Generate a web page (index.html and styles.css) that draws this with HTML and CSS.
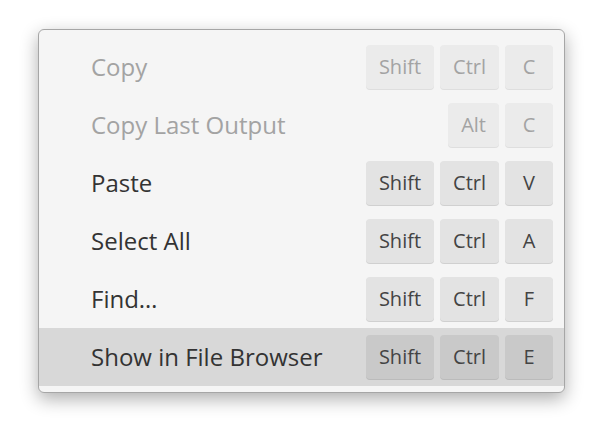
FILE: index.html
```html
<!DOCTYPE html>
<html>
<head>
<meta charset="utf-8">
<link rel="stylesheet" href="styles.css">
</head>
<body>
<div class="menu">
  <div class="item disabled"><span class="label">Copy</span><span class="keys"><span class="key">Shift</span><span class="key">Ctrl</span><span class="key">C</span></span></div>
  <div class="item disabled"><span class="label">Copy Last Output</span><span class="keys"><span class="key">Alt</span><span class="key">C</span></span></div>
  <div class="item"><span class="label">Paste</span><span class="keys"><span class="key">Shift</span><span class="key">Ctrl</span><span class="key">V</span></span></div>
  <div class="item"><span class="label">Select All</span><span class="keys"><span class="key">Shift</span><span class="key">Ctrl</span><span class="key">A</span></span></div>
  <div class="item"><span class="label">Find…</span><span class="keys"><span class="key">Shift</span><span class="key">Ctrl</span><span class="key">F</span></span></div>
  <div class="item hover"><span class="label">Show in File Browser</span><span class="keys"><span class="key">Shift</span><span class="key">Ctrl</span><span class="key">E</span></span></div>
</div>
</body>
</html>
```
FILE: styles.css
```css
html, body {
  margin: 0;
  padding: 0;
  background: #ffffff;
  font-family: "Open Sans", "Noto Sans", sans-serif;
}
body {
  padding: 29px 0 40px 38px;
}
.menu {
  width: 525px;
  background: #f5f5f5;
  border: 1px solid #a6a6a6;
  border-radius: 6px;
  padding: 8px 0 6px;
  box-shadow: 0 6px 18px rgba(0, 0, 0, 0.32);
}
.item {
  height: 58px;
  display: flex;
  align-items: center;
  justify-content: space-between;
  padding: 0 11px 0 52px;
  color: #333333;
}
.label {
  font-size: 24px;
  margin-bottom: 2px;
}
.keys {
  display: flex;
  gap: 6px;
}
.key {
  min-width: 48px;
  box-sizing: border-box;
  height: 44px;
  margin-bottom: 1px;
  padding: 0 13px;
  display: flex;
  align-items: center;
  justify-content: center;
  font-size: 20px;
  background: #e3e3e3;
  border-radius: 4px;
  box-shadow: 0 1px 0 #d0d0d0;
  color: #444444;
}
.disabled .label,
.disabled .key {
  color: #a3a3a3;
}
.disabled .key {
  background: #ebebeb;
  box-shadow: 0 1px 0 #dedede;
}
.hover {
  background: #d8d8d8;
}
.hover .key {
  background: #c9c9c9;
  box-shadow: 0 1px 0 #bbbbbb;
}
```
